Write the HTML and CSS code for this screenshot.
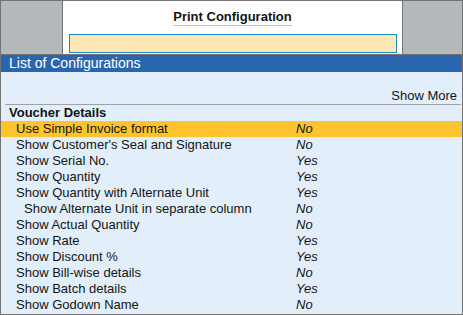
FILE: index.html
```html
<!DOCTYPE html>
<html>
<head>
  <title>Print Configuration</title>
  <link rel="stylesheet" href="styles.css">
</head>
<body>
  <div class="window">
    <div class="top">
      <div class="side side-left"></div>
      <div class="center">
        <div class="title"><span>Print Configuration</span></div>
        <input type="text" class="search">
      </div>
      <div class="side side-right"></div>
    </div>

    <div class="list-header">List of Configurations</div>

    <div class="list-body">
      <div class="show-more">Show More</div>
      <div class="group-title">Voucher Details</div>

      <div class="row selected">
        <div class="label">Use Simple Invoice format</div>
        <div class="value">No</div>
      </div>
      <div class="row">
        <div class="label">Show Customer's Seal and Signature</div>
        <div class="value">No</div>
      </div>
      <div class="row">
        <div class="label">Show Serial No.</div>
        <div class="value">Yes</div>
      </div>
      <div class="row">
        <div class="label">Show Quantity</div>
        <div class="value">Yes</div>
      </div>
      <div class="row">
        <div class="label">Show Quantity with Alternate Unit</div>
        <div class="value">Yes</div>
      </div>
      <div class="row sub">
        <div class="label">Show Alternate Unit in separate column</div>
        <div class="value">No</div>
      </div>
      <div class="row">
        <div class="label">Show Actual Quantity</div>
        <div class="value">No</div>
      </div>
      <div class="row">
        <div class="label">Show Rate</div>
        <div class="value">Yes</div>
      </div>
      <div class="row">
        <div class="label">Show Discount %</div>
        <div class="value">Yes</div>
      </div>
      <div class="row">
        <div class="label">Show Bill-wise details</div>
        <div class="value">No</div>
      </div>
      <div class="row">
        <div class="label">Show Batch details</div>
        <div class="value">Yes</div>
      </div>
      <div class="row">
        <div class="label">Show Godown Name</div>
        <div class="value">No</div>
      </div>
    </div>
  </div>
</body>
</html>
```

FILE: styles.css
```css
* {
  box-sizing: border-box;
}

body {
  margin: 0;
  font-family: "Liberation Sans", Arial, sans-serif;
  font-size: 13px;
  color: #141414;
  background-color: #fff;
}

.window {
  width: 463px;
  height: 315px;
  border: 1px solid #737373;
  display: flex;
  flex-direction: column;
  overflow: hidden;
}

.top {
  display: grid;
  grid-template-columns: 62px 1fr 60px;
  height: 54px;
  border-bottom: 1px solid #737373;
}

.side {
  background-color: #b4babb;
}

.side-left {
  border-right: 1px solid #737373;
}

.side-right {
  border-left: 1px solid #737373;
}

.center {
  background-color: #fff;
  display: flex;
  flex-direction: column;
  align-items: center;
  padding-top: 8px;
}

.title span {
  display: block;
  font-weight: bold;
  line-height: 16px;
  border-bottom: 1px solid #c4c4c4;
}

.search {
  margin-top: 8px;
  margin-left: 1px;
  width: 328px;
  height: 19px;
  border: 1px solid #1a86c8;
  background-color: #fde7b4;
  outline: none;
}

.list-header {
  height: 17px;
  line-height: 17px;
  padding-left: 8px;
  font-size: 14px;
  color: #fff;
  background-color: #2a66b0;
}

.list-body {
  flex: 1;
  background-color: #e2effa;
  padding-top: 16px;
}

.show-more {
  text-align: right;
  line-height: 16px;
  padding-right: 4px;
  margin: 0 1px 0 4px;
  border-bottom: 1px solid #a2a2a2;
}

.group-title {
  font-weight: bold;
  line-height: 16px;
  padding-left: 8px;
}

.row {
  display: grid;
  grid-template-columns: 295px 1fr;
  line-height: 16px;
}

.row .label {
  padding-left: 15px;
}

.row.sub .label {
  padding-left: 23px;
}

.row .value {
  font-style: italic;
}

.row.selected {
  background-color: #fec42d;
}
```
